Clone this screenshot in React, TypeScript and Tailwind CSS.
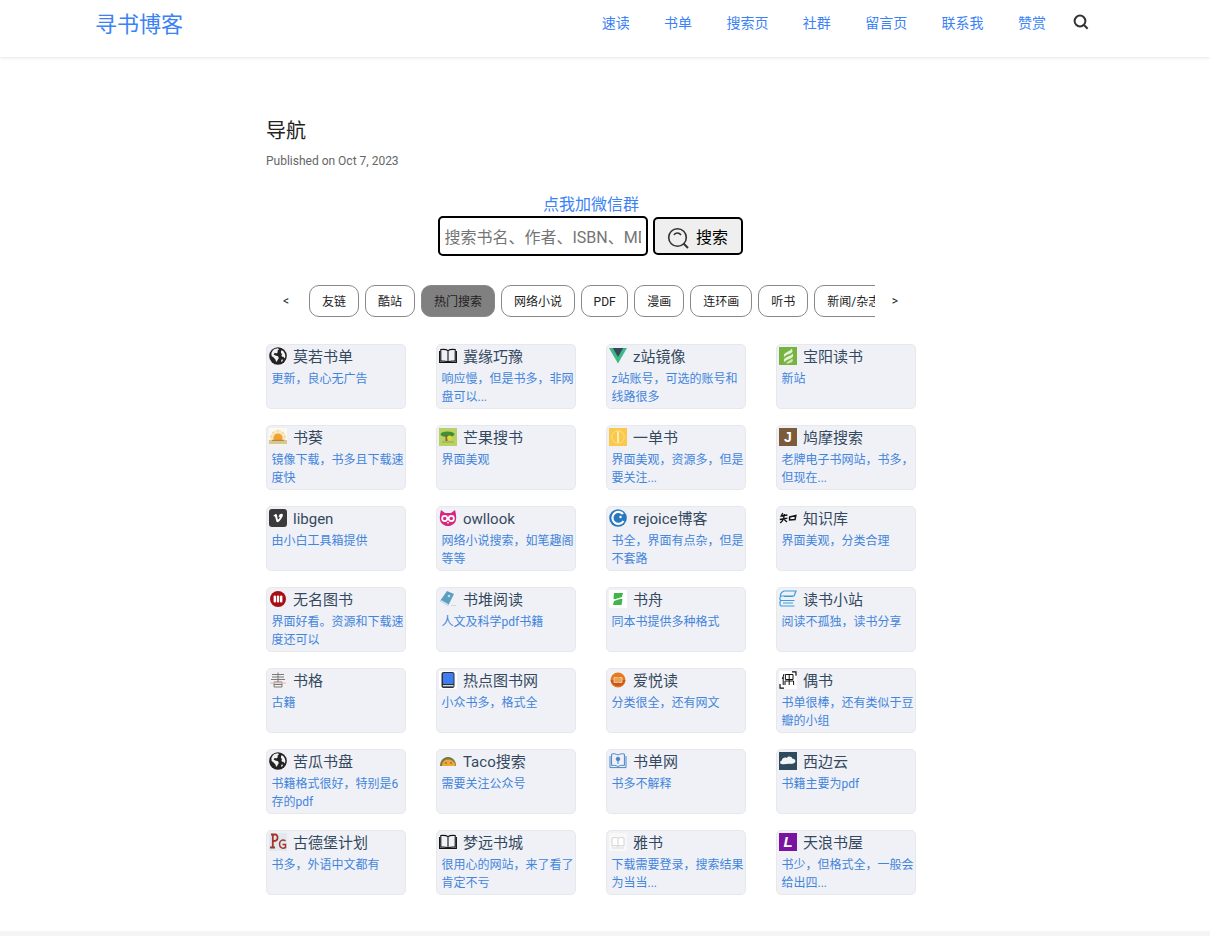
import React from "react";

const F = { fontFamily: 'Roboto,"Noto Sans CJK SC",sans-serif' };

const Globe = () => (
  <svg viewBox="0 0 18 18" className="w-full h-full">
    <circle cx="9" cy="9" r="8.8" fill="#222" />
    <path d="M5.5 2 L9 1.3 L10 2.6 L8.5 3.6 L8.8 5.2 L7.2 6.4 L5.8 5.8 L4.6 7.4 L6.4 8.6 L9 9.2 L9.8 11 L8.4 13.4 L7.2 15 L6.4 12.4 L4.6 10.6 L2.6 9 L2.4 6 L3.8 3.6 Z" fill="#f2f2f2" />
    <path d="M12 3.6 L14 3.8 L15.8 6.4 L16.4 9.4 L15.4 11.4 L14.4 9.8 L13 9.8 L12.4 8 L13.4 7 L12 6.2 Z" fill="#f2f2f2" />
    <path d="M12.6 12.6 L14.2 12.8 L13 14.8 L12 14.4 Z" fill="#f2f2f2" />
  </svg>
);
const Book = () => (
  <svg viewBox="0 0 18 18" className="w-full h-full" fill="none" stroke="#111" strokeWidth="1.1">
    <path d="M9 3.6 C7.5 2.4 5 2.2 1.8 2.5 V14 C5 13.8 7.5 14 9 15.2 C10.5 14 13 13.8 16.2 14 V2.5 C13 2.2 10.5 2.4 9 3.6 Z M9 3.6 V15.2" />
    <path d="M.6 4 V15.4 H17.4 V4" />
  </svg>
);
const Vue = () => (
  <svg viewBox="0 0 18 18" className="w-full h-full">
    <path d="M0 1 H18 L9 16.5 Z" fill="#42b883" />
    <path d="M3.8 1 H14.2 L9 10 Z" fill="#35495e" />
  </svg>
);
const Leaf = () => (
  <svg viewBox="0 0 18 18" className="w-full h-full">
    <rect width="18" height="18" fill="#76b33f" />
    <path d="M12.5 1.5 C12.5 4 6.5 4.5 5 7.5 C4.5 8.8 5 9.6 5.5 10 C6 7.5 13 7 13.5 4.5 C13.7 3.5 13.2 2.3 12.5 1.5 Z" fill="#e4f1d8" />
    <path d="M13.5 6.5 C13 9 6 9.5 5 12.5 C4.6 13.8 5.2 14.6 5.8 15 C6.5 12.5 13 12 14 9.5 C14.3 8.5 14 7.2 13.5 6.5 Z" fill="#e4f1d8" />
    <path d="M13 11.8 C12 13.5 8.5 14 7 16.4 C9 16.8 13.5 16 13.9 13.5 C14 12.8 13.5 12.2 13 11.8 Z" fill="#cfe6ba" />
  </svg>
);
const Sun = () => (
  <svg viewBox="0 0 18 18" className="w-full h-full">
    <rect width="18" height="18" fill="#fbfaf3" />
    <circle cx="9" cy="10" r="8" fill="#f9e9c6" />
    <path d="M9 1.5 V4 M3.5 3.8 L5 6 M14.5 3.8 L13 6 M1 8 L3.2 9 M17 8 L14.8 9" stroke="#f1cf8b" strokeWidth="1" />
    <circle cx="9" cy="10" r="4.6" fill="#f0a22f" />
    <rect x="0" y="12" width="18" height="4" fill="#d8c596" />
    <rect x="3" y="11.8" width="12" height="1.2" fill="#a98a4c" />
    <rect x="0" y="16" width="18" height="2" fill="#f6f2e4" />
  </svg>
);
const Mango = () => (
  <svg viewBox="0 0 18 18" className="w-full h-full">
    <rect width="18" height="18" fill="#bcd165" />
    <ellipse cx="8.5" cy="6.2" rx="7" ry="2.8" fill="#3f8f3a" />
    <rect x="6.5" y="7" width="2" height="6" fill="#7a6a2c" />
    <circle cx="10.5" cy="9.8" r="2.4" fill="#e9d23a" />
    <path d="M3 14 H15" stroke="#8aa84b" />
  </svg>
);
const Yellow = () => (
  <svg viewBox="0 0 18 18" className="w-full h-full">
    <rect width="18" height="18" fill="#fbc94a" />
    <circle cx="9" cy="9" r="6.2" fill="none" stroke="#fde29b" strokeWidth=".8" />
    <rect x="8.2" y="3.5" width="1.6" height="11" fill="#fff3cf" />
  </svg>
);
const J = () => (
  <div className="w-full h-full bg-[#7b5b3a] text-white text-[14px] font-bold leading-[18px] text-center" style={{ fontFamily: '"Liberation Sans",sans-serif' }}>J</div>
);
const Vimeo = () => (
  <svg viewBox="0 0 18 18" className="w-full h-full">
    <rect width="18" height="18" rx="3" fill="#3a3a3a" />
    <path d="M4.5 6.5 L6 5.5 C7 4.8 7.8 5 8 6.2 L8.7 10 C9 11 9.5 10.5 10.5 9 C11.2 7.8 10.2 7.4 9.5 8 C10 5.5 11.5 4.5 13 4.8 C14.2 5 14.2 6.5 13.3 8 C12 10.5 10 13 8.6 13.2 C7.5 13.3 7.2 11.8 6.6 9.5 C6.2 7.8 6 6.7 5 7.5 Z" fill="#fff" />
  </svg>
);
const Owl = () => (
  <svg viewBox="0 0 18 18" className="w-full h-full">
    <path d="M2 1 L6 4 H12 L16 1 C17 5 17.5 8 17 11 C16 15 12 17 9 17 C6 17 2 15 1 11 C.5 8 1 5 2 1 Z" fill="#d6267e" />
    <circle cx="5.7" cy="9.5" r="3.4" fill="#fff" />
    <circle cx="12.3" cy="9.5" r="3.4" fill="#fff" />
    <circle cx="5.7" cy="9.5" r="1.7" fill="#d6267e" />
    <circle cx="12.3" cy="9.5" r="1.7" fill="#d6267e" />
    <path d="M7.8 13 L9 15 L10.2 13 Z" fill="#fff" />
  </svg>
);
const Rejoice = () => (
  <svg viewBox="0 0 18 18" className="w-full h-full">
    <circle cx="9" cy="9" r="8.8" fill="#2878c0" />
    <path d="M14 5 A6 6 0 1 0 14.5 12" fill="none" stroke="#fff" strokeWidth="2.2" />
    <circle cx="11.5" cy="8" r="1.2" fill="#fff" />
  </svg>
);
const Zhi = () => (
  <svg viewBox="0 0 18 18" className="w-full h-full" fill="none" stroke="#111" strokeWidth="1.3">
    <path d="M3.8 4 L2.2 7 L8.4 6 M.8 10.5 L8.4 9.2 M5.4 5 C5.2 8.5 4 12 1.2 14 M5.2 10.5 L8 13" />
    <path d="M10.6 8 L16.8 6.6 L16 10.6 L10.6 11 Z" strokeWidth="1.5" />
  </svg>
);
const Red = () => (
  <svg viewBox="0 0 18 18" className="w-full h-full">
    <circle cx="9" cy="9" r="8" fill="#a60f12" />
    <rect x="4.6" y="5.4" width="2.4" height="7.2" rx="1" fill="#fff" />
    <rect x="7.8" y="5.4" width="2.4" height="7.2" rx="1" fill="#fff" />
    <rect x="11" y="5.4" width="2.4" height="7.2" rx="1" fill="#fff" />
  </svg>
);
const BookPile = () => (
  <svg viewBox="0 0 18 18" className="w-full h-full">
    <path d="M8 1 L15 4 L9 16 L1 11 Z" fill="#5b9fc0" />
    <path d="M1 11 L9 16 L9.8 14.5 L2 10 Z" fill="#d7e6ef" />
    <circle cx="10" cy="6" r="1.3" fill="#bcdcec" />
    <path d="M12 15.5 H17" stroke="#cfd6dc" />
  </svg>
);
const Zhou = () => (
  <svg viewBox="0 0 18 18" className="w-full h-full">
    <rect width="18" height="18" fill="#fff" />
    <path d="M5 3 H14 L13 7 L6.5 9 H13.5 L12.5 15 H4 L5 11 L11 9 H4.5 Z" fill="#3fb54a" />
  </svg>
);
const Reader = () => (
  <svg viewBox="0 0 18 18" className="w-full h-full" fill="none" stroke="#3f9be0" strokeWidth="1.2">
    <path d="M5 1 H17 L15 6 H2 C1 6 1 3 5 1 Z" />
    <path d="M2 6 C.5 7 .5 10 2 10.5 H15.5 M5 6.5 H14" />
    <path d="M2 10.5 C.5 11.5 .5 15 2 16 H15.5 M4 13 H14" />
  </svg>
);
const Shu = () => (
  <svg viewBox="0 0 18 18" className="w-full h-full">
    <rect width="18" height="18" fill="#f1f1f3" />
    <path d="M3 3.5 H15 M3 6 H15 M2 8.5 H16 M9 1.5 V11 M5 11 H13 V16 H5 Z M5 13.5 H13" stroke="#7a7a7a" strokeWidth="1" fill="none" />
    <path d="M1 12 H17" stroke="#e6b5b5" strokeWidth="1" />
  </svg>
);
const BlueBook = () => (
  <svg viewBox="0 0 18 18" className="w-full h-full">
    <rect width="18" height="18" fill="#fff" />
    <rect x="2.5" y="1" width="13" height="16" rx="2" fill="#2a3138" />
    <rect x="4" y="2" width="10.5" height="11" rx="1" fill="#3e7cf0" />
    <rect x="4" y="14" width="10.5" height="1.4" fill="#d5d8dc" />
  </svg>
);
const Face = () => (
  <svg viewBox="0 0 18 18" className="w-full h-full">
    <circle cx="9" cy="9" r="7.5" fill="#e57a1f" />
    <path d="M1.6 9 A7.5 7.5 0 0 0 16.4 9 Z" fill="#c9561a" />
    <rect x="4.5" y="6" width="9" height="6" rx="1" fill="#f5c58d" />
    <path d="M9 6 V12 M5.5 8 H8 M10 8 H12.5 M5.5 10 H8 M10 10 H12.5" stroke="#d5701f" strokeWidth=".8" />
  </svg>
);
const Ou = () => (
  <svg viewBox="0 0 18 18" className="w-full h-full">
    <rect width="18" height="18" fill="#fff" />
    <path d="M13 .8 H17 V4.8 M1 13 V17.2 H5" fill="none" stroke="#111" strokeWidth="1.2" />
    <path d="M5 3 L3.4 8 M4.2 6 V14 M6.4 3.5 H14 V8.5 H6.4 Z M10.2 3.5 V14 M6 10 V14 M6 10 H14.6 V14" fill="none" stroke="#111" strokeWidth="1" />
  </svg>
);
const Taco = () => (
  <svg viewBox="0 0 18 18" className="w-full h-full">
    <path d="M1 14 C1 8 5 5 9 5 C13 5 17 8 17 14 Z" fill="#7a7a45" />
    <path d="M3 14 C3 9.5 6 7.5 9.5 7.5 C13 7.5 16 10 16.5 14 Z" fill="#eda83a" />
    <circle cx="7" cy="11" r=".8" fill="#73501a" />
    <circle cx="12" cy="11" r=".8" fill="#73501a" />
  </svg>
);
const ListBook = () => (
  <svg viewBox="0 0 18 18" className="w-full h-full" fill="none" stroke="#4b86c8" strokeWidth="1">
    <path d="M9 3 C7 1.8 4.5 1.5 2.6 2 V13.5 C4.5 13.1 7 13.3 9 14.5 C11 13.3 13.5 13.1 15.4 13.5 V2 C13.5 1.5 11 1.8 9 3 Z" />
    <path d="M1 4 V15.6 H17 V4" />
    <circle cx="9" cy="7" r="1.8" fill="#4b86c8" />
    <path d="M9 9 V12" />
  </svg>
);
const Cloud = () => (
  <svg viewBox="0 0 18 18" className="w-full h-full">
    <rect width="18" height="18" fill="#2f4a5c" />
    <path d="M2.5 12 C.8 12 .5 9 2.8 8.6 C3 6 6 5 7.5 6 C9 3.5 13 4 13.5 6.8 C16 6.4 17.5 9.5 15.5 10.8 C14 12 13 11.6 12 12 C9 11 6 13 2.5 12 Z" fill="#f2f4f5" />
  </svg>
);
const PG = () => (
  <svg viewBox="0 0 18 18" className="w-full h-full">
    <rect width="18" height="18" fill="#dfe9ee" />
    <path d="M2 1.5 H6 C9.5 1.5 9.5 8 5.5 8 H3.8 V14 M3.8 1.8 V14 M1 14.5 H6" fill="none" stroke="#a5342a" strokeWidth="1.8" />
    <path d="M16.5 8 C14 6 10.5 7.5 10.5 11 C10.5 15 14 16 16.5 14.5 V11.5 H13.5" fill="none" stroke="#a5342a" strokeWidth="1.5" />
  </svg>
);
const Ya = () => (
  <svg viewBox="0 0 18 18" className="w-full h-full">
    <rect width="18" height="18" fill="#f8f8f8" />
    <path d="M3 5 C6 4 8 4.5 9 5.5 C10 4.5 12 4 15 5 V13 C12 12 10 12.5 9 13.5 C8 12.5 6 12 3 13 Z" fill="#fff" stroke="#c9c9c9" strokeWidth=".8" />
    <path d="M9 5.5 V13.5" stroke="#c9c9c9" strokeWidth=".8" />
    <path d="M3 15 H15" stroke="#dcdcdc" />
  </svg>
);
const Purple = () => (
  <div className="w-full h-full bg-[#7a14a0] text-white text-[15px] italic font-bold leading-[18px] text-center" style={{ fontFamily: '"Liberation Sans",sans-serif' }}>L</div>
);

const SITES: [React.FC, string, string][] = [
  [Globe, "莫若书单", "更新，良心无广告"],
  [Book, "冀缘巧豫", "响应慢，但是书多，非网盘可以..."],
  [Vue, "z站镜像", "z站账号，可选的账号和线路很多"],
  [Leaf, "宝阳读书", "新站"],
  [Sun, "书葵", "镜像下载，书多且下载速度快"],
  [Mango, "芒果搜书", "界面美观"],
  [Yellow, "一单书", "界面美观，资源多，但是要关注..."],
  [J, "鸠摩搜索", "老牌电子书网站，书多，但现在..."],
  [Vimeo, "libgen", "由小白工具箱提供"],
  [Owl, "owllook", "网络小说搜索，如笔趣阁等等"],
  [Rejoice, "rejoice博客", "书全，界面有点杂，但是不套路"],
  [Zhi, "知识库", "界面美观，分类合理"],
  [Red, "无名图书", "界面好看。资源和下载速度还可以"],
  [BookPile, "书堆阅读", "人文及科学pdf书籍"],
  [Zhou, "书舟", "同本书提供多种格式"],
  [Reader, "读书小站", "阅读不孤独，读书分享"],
  [Shu, "书格", "古籍"],
  [BlueBook, "热点图书网", "小众书多，格式全"],
  [Face, "爱悦读", "分类很全，还有网文"],
  [Ou, "偶书", "书单很棒，还有类似于豆瓣的小组"],
  [Globe, "苦瓜书盘", "书籍格式很好，特别是6存的pdf"],
  [Taco, "Taco搜索", "需要关注公众号"],
  [ListBook, "书单网", "书多不解释"],
  [Cloud, "西边云", "书籍主要为pdf"],
  [PG, "古德堡计划", "书多，外语中文都有"],
  [Book, "梦远书城", "很用心的网站，来了看了肯定不亏"],
  [Ya, "雅书", "下载需要登录，搜索结果为当当..."],
  [Purple, "天浪书屋", "书少，但格式全，一般会给出四..."],
];

const NAV = ["速读", "书单", "搜索页", "社群", "留言页", "联系我", "赞赏"];
const TABS = ["友链", "酷站", "热门搜索", "网络小说", "PDF", "漫画", "连环画", "听书", "新闻/杂志"];

export default function App() {
  return (
    <div className="h-[936px] overflow-hidden bg-white flex flex-col" style={F}>
      <header className="h-[57px] shrink-0 bg-white shadow-[0_1px_3px_rgba(0,0,0,0.1)] flex items-center pl-[95px] pr-[121px]">
        <span className="text-[22px] leading-[50px] text-[#3b82f6] -mt-[8px]">寻书博客</span>
        <nav className="ml-auto flex items-center gap-[34.4px] -mt-[11px]">
          {NAV.map((n) => (
            <span key={n} className="text-[14px] text-[#3b82f6]">{n}</span>
          ))}
          <svg viewBox="0 0 16 16" className="w-[16px] h-[16px] -ml-[7.4px] -mt-[3px]" fill="none" stroke="#333" strokeWidth="2">
            <circle cx="7" cy="7" r="5.4" />
            <path d="M11 11 L14.6 14.8" />
          </svg>
        </nav>
      </header>

      <main className="flex-1 w-[678px] mx-auto pt-[60px]">
        <h1 className="text-[20px] leading-[28px] text-[#222] font-normal">导航</h1>
        <p className="text-[12px] leading-[18px] text-[#666] mt-[7px]">Published on Oct 7, 2023</p>

        <div className="w-[650px]">
          <div className="mt-[24px] text-center text-[16px] leading-[22px] text-[#3b82f6]">点我加微信群</div>
          <div className="flex justify-center items-center gap-[5px] pr-[2px]">
            <input
              readOnly
              placeholder="搜索书名、作者、ISBN、MD5"
              className="w-[210px] h-[40px] border-2 border-black rounded-[5px] bg-white px-[5px] pt-[2px] text-[16px] placeholder:text-[#757575] outline-none"
            />
            <div className="w-[90px] h-[38px] border-2 border-black rounded-[5px] bg-[#efefef] flex items-center justify-center gap-[7px] text-[16px] text-black">
              <svg viewBox="0 0 22 22" className="w-[22px] h-[22px] mt-[3px]" fill="none" stroke="#333" strokeWidth="1.6">
                <circle cx="10.5" cy="10.5" r="8.8" />
                <path d="M7 8 C8 5.5 12 5 14 8" />
                <path d="M16.5 16.5 L21 21" strokeWidth="2" />
              </svg>
              <span className="mt-[3px]">搜索</span>
            </div>
          </div>

          <div className="mt-[29px] -ml-[3px] flex items-center">
            <span className="w-[46px] text-center text-[12px] text-[#222]">&lt;</span>
            <div className="w-[566px] overflow-hidden flex gap-[6px]">
              {TABS.map((t) => (
                <span
                  key={t}
                  className={`shrink-0 h-[32px] border border-[#888] rounded-[10px] flex items-center pt-[1px] text-[12px] text-[#222] whitespace-nowrap ${t === "PDF" ? "px-[11.5px]" : "px-[12px]"} ${t === "热门搜索" ? "bg-[#808080]" : "bg-white"}`}
                >
                  {t}
                </span>
              ))}
            </div>
            <span className="w-[40px] text-center text-[12px] text-[#222]">&gt;</span>
          </div>

          <div className="mt-[27px] grid grid-cols-4 gap-x-[30px] gap-y-[16px]">
            {SITES.map(([Icon, name, desc], i) => (
              <div key={i} className="h-[65px] bg-[#f0f1f6] border border-[#e7e8ec] rounded-[5px] pl-[2px] pt-[2px]">
                <div className="flex items-center h-[18px]">
                  <span className="w-[18px] h-[18px] shrink-0"><Icon /></span>
                  <span className="ml-[6px] text-[15px] leading-[18px] text-[#34495e] whitespace-nowrap pt-[1px]">{name}</span>
                </div>
                <p className="mt-[4.5px] pl-[2.5px] text-[12px] leading-[18px] text-[#4285dc]">{desc}</p>
              </div>
            ))}
          </div>
        </div>
      </main>

      <footer className="h-[5px] shrink-0 bg-[#f5f5f5]" />
    </div>
  );
}
